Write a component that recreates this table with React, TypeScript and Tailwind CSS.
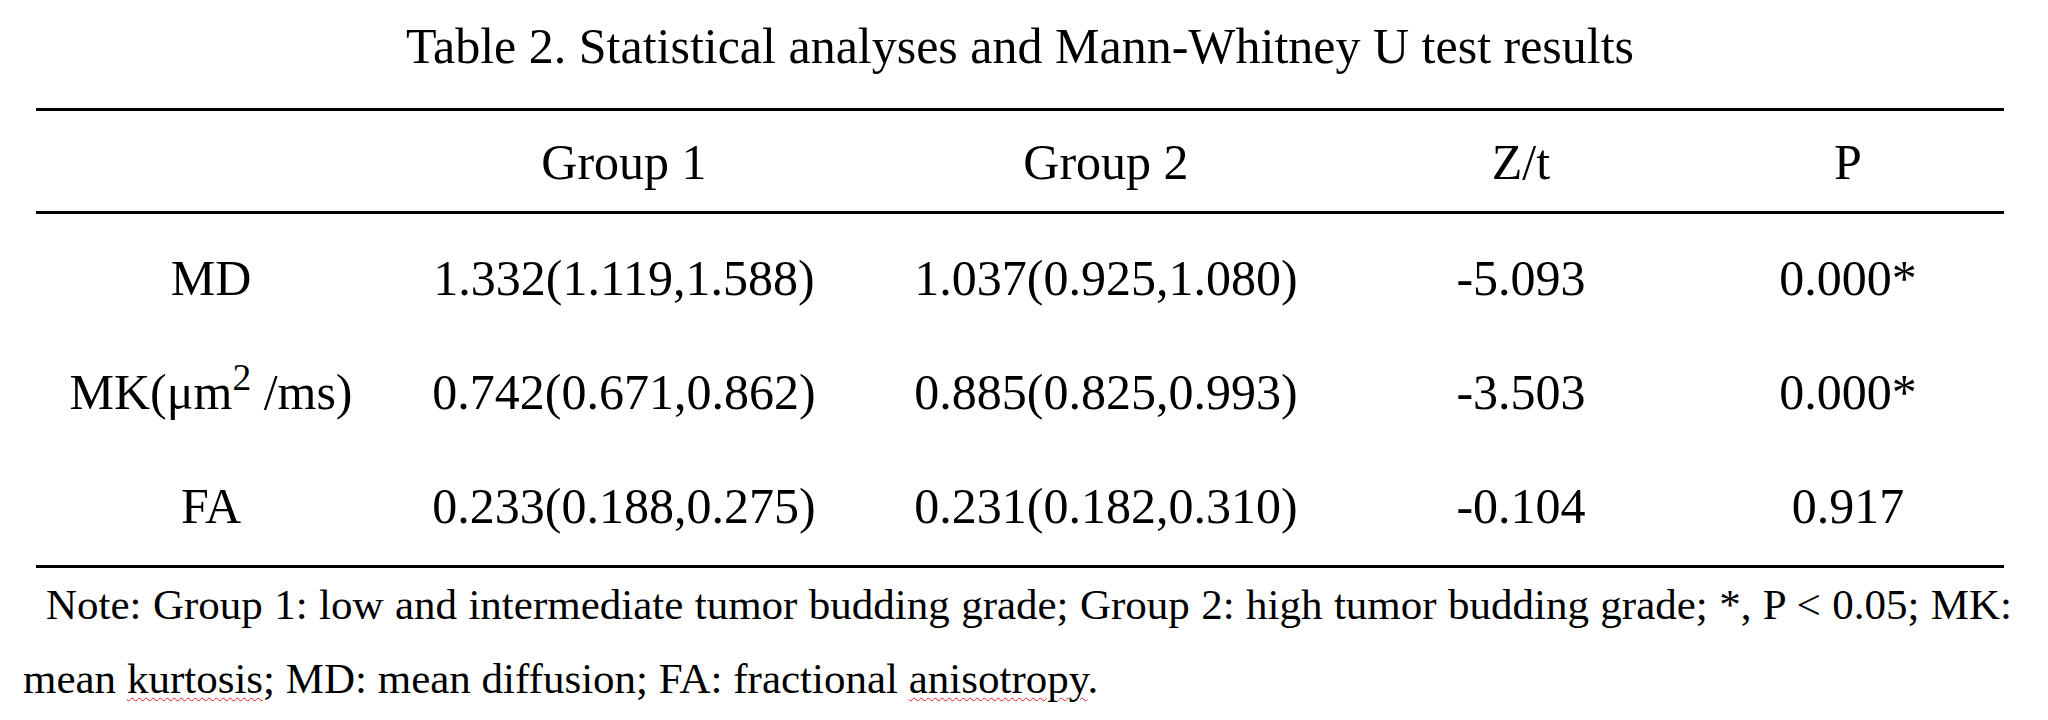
import React from 'react';

type Row = { label: React.ReactNode; g1: string; g2: string; z: string; p: string };

const rows: Row[] = [
  { label: 'MD', g1: '1.332(1.119,1.588)', g2: '1.037(0.925,1.080)', z: '-5.093', p: '0.000*' },
  {
    label: (
      <>
        MK(μm<sup>2</sup> /ms)
      </>
    ),
    g1: '0.742(0.671,0.862)',
    g2: '0.885(0.825,0.993)',
    z: '-3.503',
    p: '0.000*',
  },
  { label: 'FA', g1: '0.233(0.188,0.275)', g2: '0.231(0.182,0.310)', z: '-0.104', p: '0.917' },
];

const cols = 'grid grid-cols-[350px_476px_488px_342px_312px] text-center';

// wavy red spell-check line, like the word processor shows
function Squiggle({ children }: { children: React.ReactNode }) {
  return (
    <span className="underline decoration-wavy decoration-[#e02020] decoration-1 underline-offset-[4px]">
      {children}
    </span>
  );
}

export default function App() {
  return (
    <div className="w-[2048px] h-[720px] bg-white text-black font-['Liberation_Serif','Times_New_Roman',serif] pl-[23px]">
      <div className="ml-[13px] w-[1968px]">
        <div className="pt-[18px] text-center text-[50px] leading-[56px]">
          Table 2. Statistical analyses and Mann-Whitney U test results
        </div>

        <div className="mt-[34px] border-t-[3px] border-black" />
        <div className={`${cols} text-[50px] leading-[56px] pt-[23px] pb-[21px]`}>
          <div />
          <div>Group 1</div>
          <div>Group 2</div>
          <div>Z/t</div>
          <div>P</div>
        </div>
        <div className="border-t-[3px] border-black" />

        <div className="flex flex-col gap-[58px] pt-[36px] pb-[31px] text-[50px] leading-[56px]">
          {rows.map((r, i) => (
            <div key={i} className={cols}>
              <div>{r.label}</div>
              <div>{r.g1}</div>
              <div>{r.g2}</div>
              <div>{r.z}</div>
              <div>{r.p}</div>
            </div>
          ))}
        </div>
        <div className="border-t-[3px] border-black" />
      </div>

      <p className="w-[1989px] text-[43px] leading-[74px] text-justify indent-[23px]">
        <span>Note: Group 1: low and intermediate tumor budding grade; Group 2: high tumor budding grade; *, P &lt; 0.05; MK:</span>{' '}
        <span>mean</span> <Squiggle>kurtosis</Squiggle>
        <span>; MD: mean diffusion; FA: fractional</span> <Squiggle>anisotropy</Squiggle>.
      </p>
    </div>
  );
}
